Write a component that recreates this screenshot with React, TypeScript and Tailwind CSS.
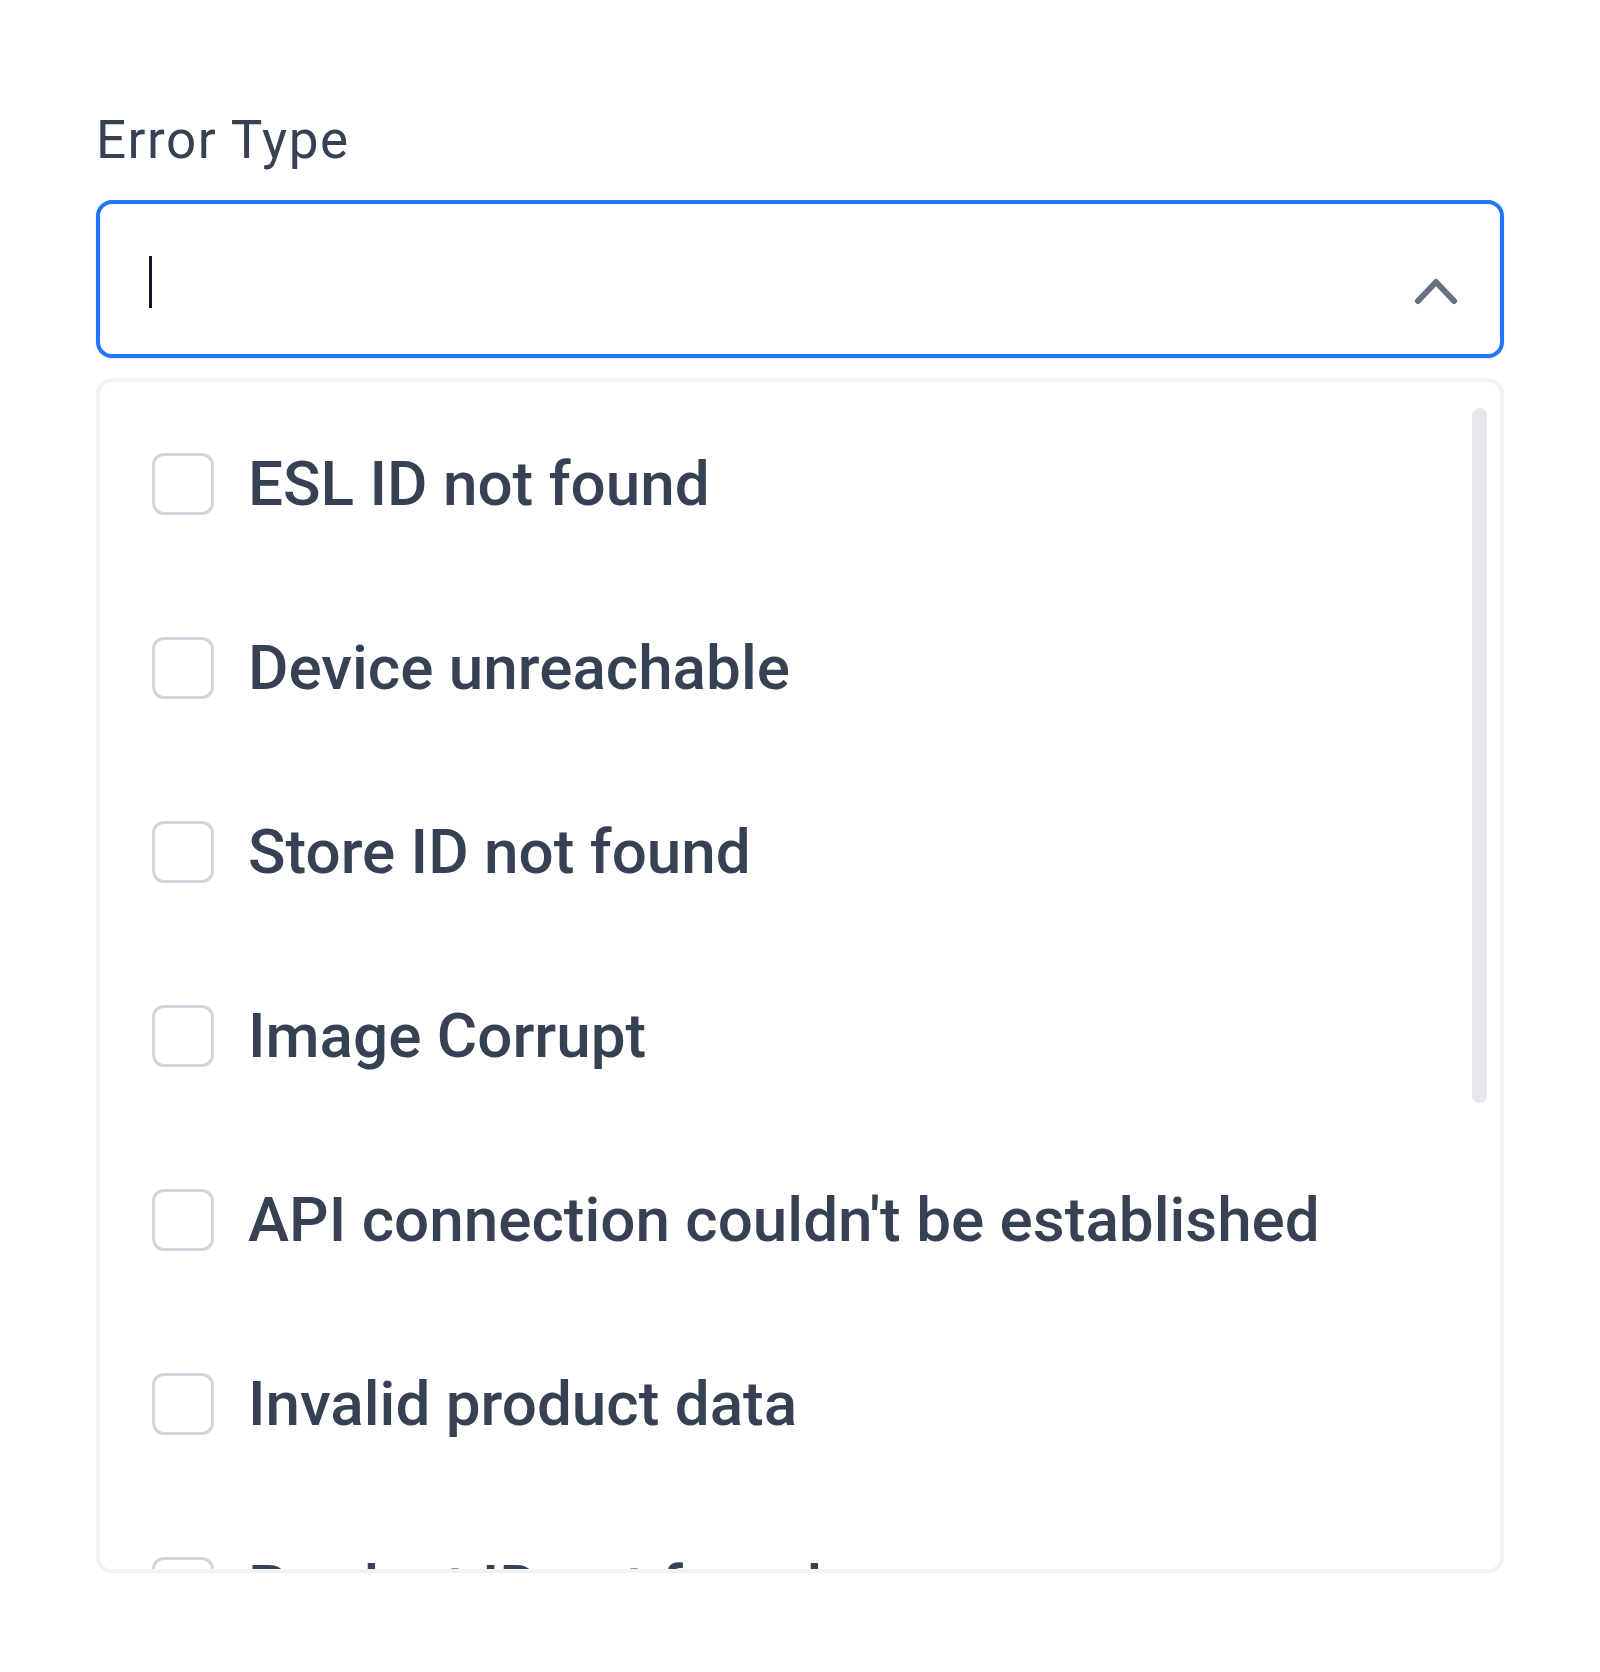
import React from 'react';

const errorTypes = [
  'ESL ID not found',
  'Device unreachable',
  'Store ID not found',
  'Image Corrupt',
  "API connection couldn't be established",
  'Invalid product data',
  'Product ID not found',
];

const ChevronUp = () => (
  <svg width="46" height="30" viewBox="0 0 46 30" fill="none" className="text-gray-500">
    <path d="M5 25 L23 6 L41 25" stroke="currentColor" strokeWidth="6" strokeLinecap="round" strokeLinejoin="round" />
  </svg>
);

const App: React.FC = () => {
  return (
    <div className="min-h-[1672px] bg-white px-[96px] pt-[100px] font-['Roboto',sans-serif] text-gray-700">
      <label className="block text-[53px] leading-[80px] tracking-[1.5px] mb-[20px]">Error Type</label>

      <div className="flex h-[158px] items-center justify-between rounded-[16px] border-4 border-[#1e76fa] bg-white pl-[49px] pr-[41px] shadow-sm">
        <span className="mt-[6px] block h-[52px] w-[3px] bg-gray-900" />
        <span className="pt-[24px]">
          <ChevronUp />
        </span>
      </div>

      <div className="relative mt-[20px] h-[1195px] overflow-hidden rounded-[16px] border-4 border-[#f1f2f6] bg-white pt-[10px]">
        <ul>
          {errorTypes.map((item) => (
            <li key={item} className="flex h-[184px] items-center gap-[34px] pl-[52px]">
              <span className="block h-[62px] w-[62px] shrink-0 rounded-[12px] border-[3px] border-gray-300 bg-white" />
              <span className="text-[62px] font-medium leading-none">{item}</span>
            </li>
          ))}
        </ul>
        <div className="absolute right-[13px] top-[26px] h-[695px] w-[15px] rounded-full bg-gray-200" />
      </div>
    </div>
  );
};

export default App;
